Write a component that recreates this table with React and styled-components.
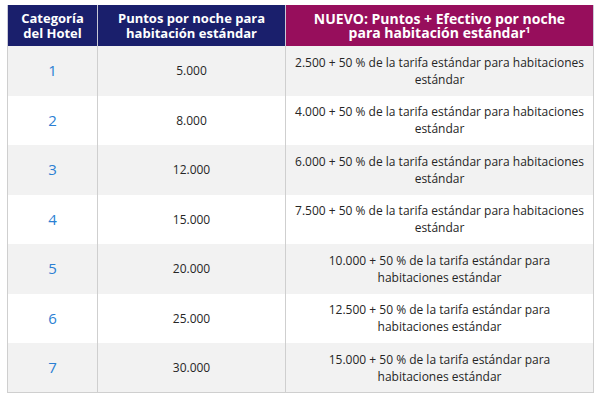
import styled, { createGlobalStyle } from "styled-components";

const GlobalStyle = createGlobalStyle`
  html, body {
    margin: 0;
    padding: 0;
    background: #ffffff;
    font-family: "Open Sans", "Liberation Sans", sans-serif;
  }
`;

const rows = [
  { cat: "1", points: "5.000", cash: "2.500" },
  { cat: "2", points: "8.000", cash: "4.000" },
  { cat: "3", points: "12.000", cash: "6.000" },
  { cat: "4", points: "15.000", cash: "7.500" },
  { cat: "5", points: "20.000", cash: "10.000" },
  { cat: "6", points: "25.000", cash: "12.500" },
  { cat: "7", points: "30.000", cash: "15.000" },
];

function App() {
  return (
    <Page>
      <GlobalStyle />
      <Table>
        <colgroup>
          <col style={{ width: 90 }} />
          <col style={{ width: 188 }} />
          <col />
        </colgroup>
        <thead>
          <tr>
            <HeadCell>
              Categoría
              <br />
              del Hotel
            </HeadCell>
            <HeadCell>
              Puntos por noche para
              <br />
              habitación estándar
            </HeadCell>
            <HeadCell $accent>
              NUEVO: Puntos + Efectivo por noche
              <br />
              para habitación estándar<sup>1</sup>
            </HeadCell>
          </tr>
        </thead>
        <tbody>
          {rows.map((r, i) => (
            <Row key={r.cat} $odd={i % 2 === 0}>
              <Cell $number>{r.cat}</Cell>
              <Cell>{r.points}</Cell>
              <Cell $wide>
                {r.cash} + 50 % de la tarifa estándar para habitaciones
                estándar
              </Cell>
            </Row>
          ))}
        </tbody>
      </Table>
    </Page>
  );
}

export default App;

const Page = styled.div`
  padding: 5px 7px 0 7px;
  width: 600px;
  box-sizing: border-box;
`;

const Table = styled.table`
  width: 587px;
  border-collapse: collapse;
  table-layout: fixed;
`;

const HeadCell = styled.th`
  height: 41px;
  padding: 0 4px;
  background: ${({ $accent }) => ($accent ? "#970e5c" : "#1a1f6c")};
  color: #ffffff;
  font-size: ${({ $accent }) => ($accent ? "14px" : "13px")};
  font-weight: 700;
  line-height: ${({ $accent }) => ($accent ? "14px" : "15px")};
  text-align: center;
  vertical-align: middle;
  border-left: 1px solid #c9c9d6;
  border-right: 1px solid #c9c9d6;

  sup {
    font-size: 9px;
    line-height: 0;
    vertical-align: 5px;
  }
`;

const Row = styled.tr`
  background: ${({ $odd }) => ($odd ? "#f2f2f2" : "#ffffff")};
`;

const Cell = styled.td`
  height: 49.5px;
  box-sizing: border-box;
  padding: 0 ${({ $wide }) => ($wide ? "6px" : "4px")};
  border-left: 1px solid #cfcfcf;
  border-right: 1px solid #cfcfcf;
  color: ${({ $number }) => ($number ? "#2b7fd3" : "#262626")};
  font-size: ${({ $number }) => ($number ? "15px" : "12px")};
  line-height: 17px;
  text-align: center;
  vertical-align: middle;

  tr:last-child & {
    border-bottom: 1px solid #cfcfcf;
  }
`;
